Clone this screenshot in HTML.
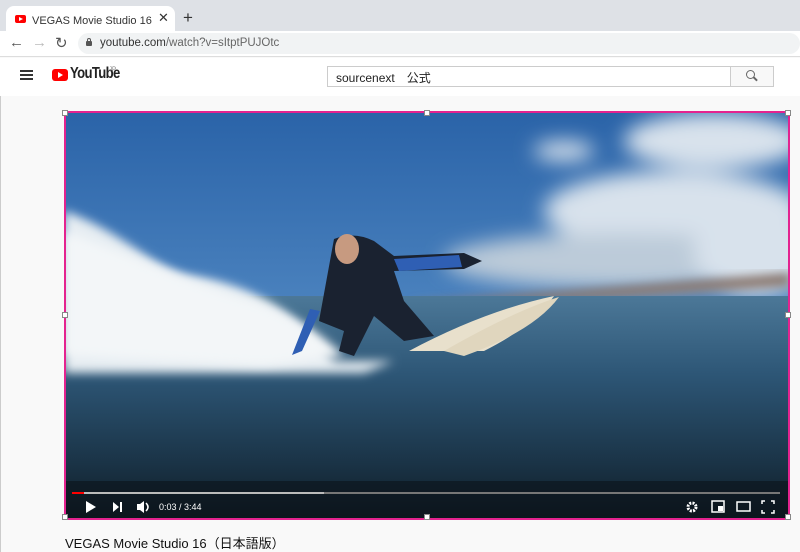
<!DOCTYPE html>
<html><head><meta charset="utf-8"><style>
*{margin:0;padding:0;box-sizing:border-box}
body{width:800px;height:552px;overflow:hidden;background:#f9f9f9;font-family:"Liberation Sans","Noto Sans CJK JP",sans-serif;position:relative}
.abs{position:absolute}
</style></head><body>
<div class="abs" style="left:0;top:0;width:800px;height:31px;background:#dee1e6"></div>
<div class="abs" style="left:6px;top:6px;width:169px;height:26px;background:#fff;border-radius:8px 8px 0 0"></div>
<div class="abs" style="left:15px;top:15px;width:11px;height:8px;background:#f00;border-radius:2px"></div>
<div class="abs" style="left:19px;top:17px;width:0;height:0;border-left:4px solid #fff;border-top:2px solid transparent;border-bottom:2px solid transparent"></div>
<div class="abs" style="left:32px;top:12px;font-size:11px;color:#333;white-space:nowrap;width:122px;overflow:hidden">VEGAS Movie Studio 16（日本語版）</div>
<div class="abs" style="left:158px;top:10px;font-size:13px;color:#333">✕</div>
<div class="abs" style="left:183px;top:8px;font-size:17px;color:#333">+</div>
<div class="abs" style="left:0;top:31px;width:800px;height:26px;background:#fff;border-bottom:1px solid #ddd"></div>
<div class="abs" style="left:9px;top:34px;font-size:15px;color:#555">←</div>
<div class="abs" style="left:32px;top:34px;font-size:15px;color:#bbb">→</div>
<div class="abs" style="left:55px;top:34px;font-size:15px;color:#555">↻</div>
<div class="abs" style="left:78px;top:33px;width:722px;height:21px;background:#f1f3f4;border-radius:11px"></div>
<div class="abs" style="left:86px;top:41px;width:6px;height:5px;background:#555;border-radius:1px"></div>
<div class="abs" style="left:87px;top:38px;width:4px;height:4px;border:1px solid #555;border-bottom:none;border-radius:2px 2px 0 0"></div>
<div class="abs" style="left:100px;top:37px;font-size:11.5px;color:#333">youtube.com<span style="color:#666">/watch?v=sItptPUJOtc</span></div>
<div class="abs" style="left:0;top:58px;width:800px;height:38px;background:#fff"></div>
<div class="abs" style="left:20px;top:70px;width:13px;height:2px;background:#333;box-shadow:0 4px 0 #333,0 8px 0 #333"></div>
<div class="abs" style="left:52px;top:69px;width:16px;height:12px;background:#f00;border-radius:3px"></div>
<div class="abs" style="left:58px;top:72px;width:0;height:0;border-left:5px solid #fff;border-top:3px solid transparent;border-bottom:3px solid transparent"></div>
<div class="abs" style="left:70px;top:65px;font-size:16px;font-weight:bold;color:#222;letter-spacing:-0.8px;transform:scaleX(0.82);transform-origin:left">YouTube</div>
<div class="abs" style="left:109px;top:67px;font-size:6px;color:#777">JP</div>
<div class="abs" style="left:327px;top:66px;width:404px;height:21px;border:1px solid #ccc;background:#fff"></div>
<div class="abs" style="left:336px;top:69px;font-size:12px;color:#222">sourcenext　公式</div>
<div class="abs" style="left:730px;top:66px;width:44px;height:21px;border:1px solid #ccc;background:#f8f8f8"></div>
<div class="abs" style="left:746px;top:70px;width:9px;height:9px;border:1.5px solid #666;border-radius:50%"></div>
<div class="abs" style="left:753px;top:78px;width:5px;height:1.5px;background:#666;transform:rotate(45deg)"></div>
<div class="abs" style="left:0;top:96px;width:1px;height:456px;background:#ccc"></div>
<svg class="abs" style="left:64px;top:111px" width="726" height="409" viewBox="0 0 726 409">
<defs>
<linearGradient id="sky" x1="0" y1="0" x2="0" y2="1"><stop offset="0" stop-color="#2a63a8"/><stop offset="1" stop-color="#6ea4d6"/></linearGradient>
<linearGradient id="sea" x1="0" y1="0" x2="0" y2="1"><stop offset="0" stop-color="#4c7898"/><stop offset="0.35" stop-color="#2d5676"/><stop offset="0.75" stop-color="#1a3346"/><stop offset="1" stop-color="#0e1b24"/></linearGradient>
<filter id="b"><feGaussianBlur stdDeviation="10"/></filter>
<filter id="b2"><feGaussianBlur stdDeviation="5"/></filter>
</defs>
<rect width="726" height="409" fill="url(#sky)"/>
<g filter="url(#b)" fill="#d8e2ec">
<ellipse cx="650" cy="30" rx="90" ry="28"/><ellipse cx="610" cy="100" rx="130" ry="40"/><ellipse cx="560" cy="150" rx="180" ry="28" fill="#bccbd9"/><ellipse cx="690" cy="140" rx="60" ry="45"/><ellipse cx="500" cy="40" rx="30" ry="10"/>
</g>
<path d="M350 192 L726 162 L726 175 L350 200Z" fill="#8a7870" filter="url(#b2)"/>
<rect y="185" width="726" height="224" fill="url(#sea)"/>
<path d="M0 100 C60 120 90 160 130 165 C190 175 230 200 270 250 L330 250 L300 262 L0 262Z" fill="#e6edf2" filter="url(#b2)"/>
<path d="M0 120 C60 140 120 170 190 190 C230 205 260 225 280 245 L200 255 L0 245Z" fill="#f3f6f8" filter="url(#b2)"/>
<path d="M345 240 Q420 200 490 185 Q470 215 420 240 Z" fill="#e8e0cc"/>
<path d="M380 240 Q450 200 495 186 Q470 220 400 245 Z" fill="#e0d6be"/>
<path d="M270 128 Q290 120 310 130 L330 145 L400 142 L418 150 L400 158 L330 160 L340 190 L370 225 L340 230 L310 205 L300 225 L290 245 L275 240 L280 220 L255 210 Z" fill="#1a2230"/>
<path d="M330 148 L395 144 L398 156 L335 160Z" fill="#2f5fb4"/>
<path d="M256 200 L238 240 L228 244 L246 198Z" fill="#2f5fb4"/>
<ellipse cx="283" cy="138" rx="12" ry="15" fill="#c79a80"/>
<path d="M0 370 L726 370 L726 409 L0 409Z" fill="#0b1219" opacity=".6"/>
<rect x="8" y="381" width="708" height="2" fill="#777"/>
<rect x="8" y="381" width="252" height="2" fill="#bbb"/>
<rect x="8" y="381" width="12" height="2" fill="#f00"/>
<path d="M22 390 L32 396 L22 402Z" fill="#fff"/>
<path d="M49 391 L55 396 L49 401Z M56 391 h2 v10 h-2Z" fill="#fff"/>
<path d="M73 393 h3 l4 -3 v12 l-4 -3 h-3Z" fill="#fff"/>
<path d="M82 392 q4 4 0 8" stroke="#fff" stroke-width="1.5" fill="none"/>
<text x="95" y="399" font-size="9" fill="#fff" font-family="Liberation Sans">0:03 / 3:44</text>
<circle cx="628" cy="396" r="4" fill="none" stroke="#fff" stroke-width="3" stroke-dasharray="2 1.2"/>
<rect x="648" y="390" width="12" height="11" fill="none" stroke="#fff" stroke-width="1.5"/><rect x="654" y="395" width="5" height="5" fill="#fff"/>
<rect x="673" y="391" width="13" height="9" fill="none" stroke="#fff" stroke-width="1.5"/>
<path d="M698 393 v-3 h3 M707 390 h3 v3 M710 399 v3 h-3 M701 402 h-3 v-3" stroke="#fff" stroke-width="1.5" fill="none"/>
</svg>
<div class="abs" style="left:64px;top:111px;width:726px;height:409px;border:2px solid #e4238f"></div>
<div class="abs" style="left:62px;top:110px;width:6px;height:6px;background:#fff;border:1px solid #888"></div>
<div class="abs" style="left:424px;top:110px;width:6px;height:6px;background:#fff;border:1px solid #888"></div>
<div class="abs" style="left:785px;top:110px;width:6px;height:6px;background:#fff;border:1px solid #888"></div>
<div class="abs" style="left:62px;top:312px;width:6px;height:6px;background:#fff;border:1px solid #888"></div>
<div class="abs" style="left:785px;top:312px;width:6px;height:6px;background:#fff;border:1px solid #888"></div>
<div class="abs" style="left:62px;top:514px;width:6px;height:6px;background:#fff;border:1px solid #888"></div>
<div class="abs" style="left:424px;top:514px;width:6px;height:6px;background:#fff;border:1px solid #888"></div>
<div class="abs" style="left:785px;top:514px;width:6px;height:6px;background:#fff;border:1px solid #888"></div>
<div class="abs" style="left:65px;top:533px;font-size:13px;color:#111">VEGAS Movie Studio 16（日本語版）</div>
</body></html>
